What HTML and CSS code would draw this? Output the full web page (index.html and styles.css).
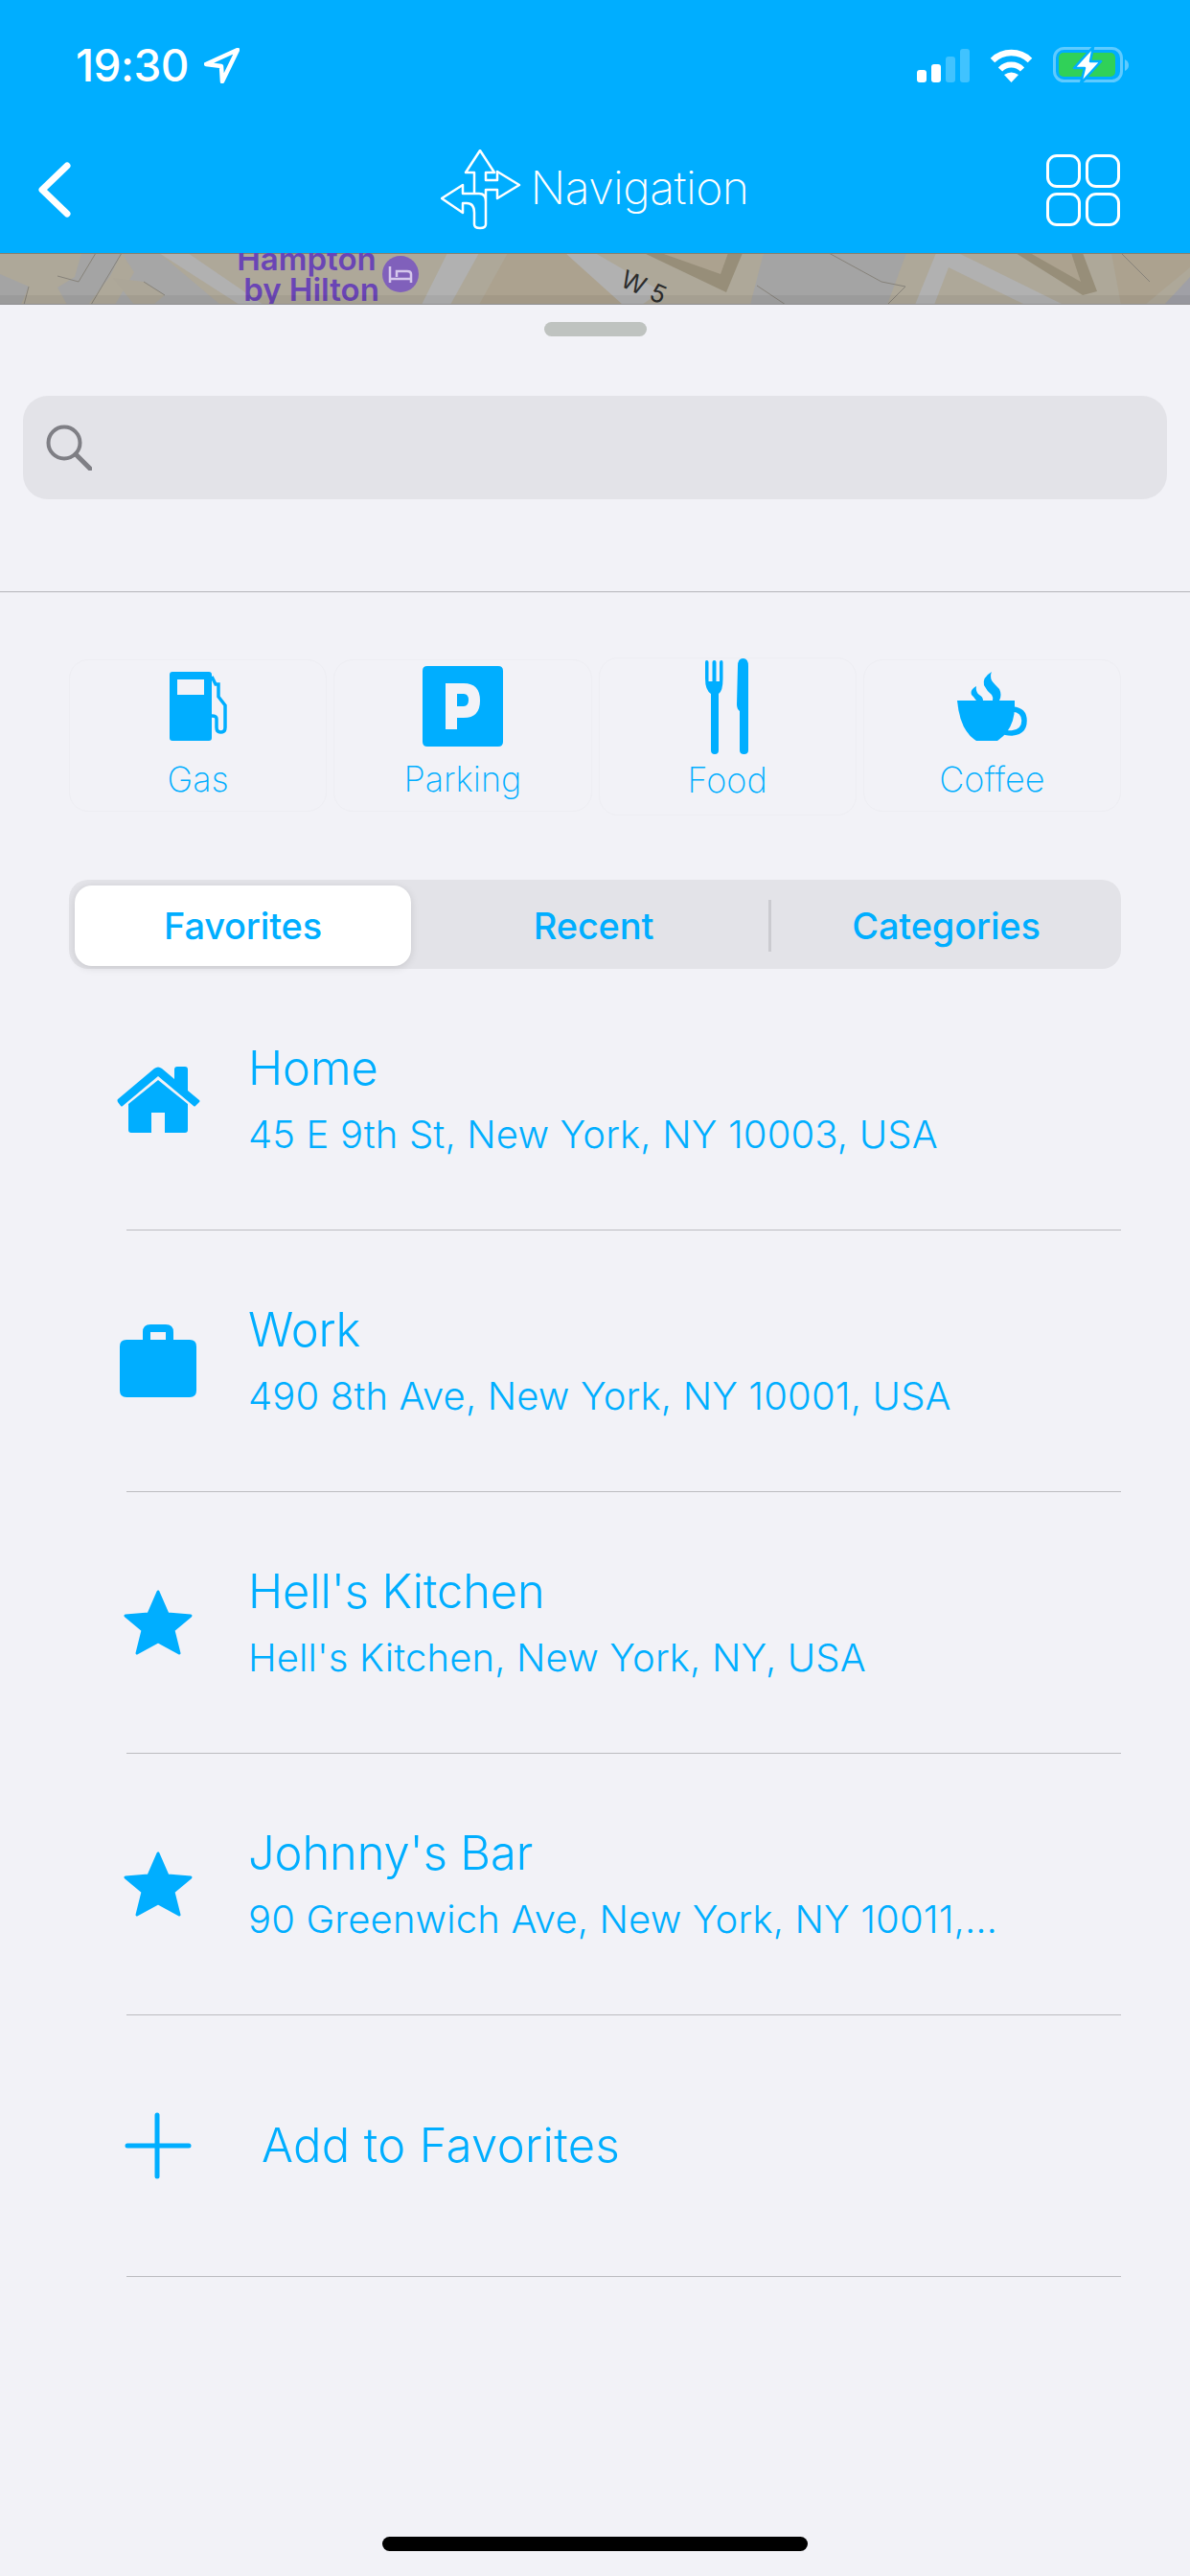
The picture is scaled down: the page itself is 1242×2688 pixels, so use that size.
FILE: index.html
```html
<!DOCTYPE html>
<html lang="en">
<head>
    <meta charset="UTF-8">
    <meta name="viewport" content="width=device-width, initial-scale=1.0">
    <title>Navigation</title>
    <link rel="stylesheet" href="styles.css">
</head>
<body>
    <header class="app-header">
        <div class="status-bar">
            <div class="status-left">
                <span class="status-time">19:30</span>
                <svg class="icon-location" viewBox="0 0 37 37"><path d="M35 2 L2 17 L18 19 L19 35 Z" fill="none" stroke="#fff" stroke-width="4.5" stroke-linejoin="round"/></svg>
            </div>
            <div class="status-right">
                <div class="signal">
                    <span class="bar bar-1"></span>
                    <span class="bar bar-2"></span>
                    <span class="bar bar-3 bar-off"></span>
                    <span class="bar bar-4 bar-off"></span>
                </div>
                <svg class="icon-wifi" viewBox="0 0 47 36">
                    <path d="M4 13 A28 28 0 0 1 43 13" fill="none" stroke="#fff" stroke-width="6.5"/>
                    <path d="M12 22.5 A16 16 0 0 1 35 22.5" fill="none" stroke="#fff" stroke-width="6"/>
                    <path d="M23.5 36 L16 28 Q23.5 23 31 28 Z" fill="#fff"/>
                </svg>
                <svg class="icon-battery" viewBox="0 0 79 38">
                    <rect x="1.5" y="1.5" width="70" height="34" rx="10" fill="none" stroke="#5fcbff" stroke-width="3"/>
                    <rect x="6" y="6" width="59" height="25" rx="5" fill="#30d158"/>
                    <path d="M75 13 Q79 15 79 19 Q79 23 75 25 Z" fill="#5fcbff"/>
                    <path d="M42 0 L22 22 H33 L29 38 L50 15 H39 Z" fill="#fff" stroke="#00aeff" stroke-width="2.5" stroke-linejoin="round"/>
                </svg>
            </div>
        </div>
        <nav class="nav-bar">
            <svg class="icon-back" viewBox="0 0 34 58"><path d="M30 4 L4 29 L30 54" fill="none" stroke="#fff" stroke-width="7" stroke-linecap="round" stroke-linejoin="round"/></svg>
            <div class="nav-title">
                <svg class="icon-turns" viewBox="0 0 84 84">
                    <path d="M41 1 L56 24 H47 V32 H59 V23 L82 37 L59 51 V42 H47 V78 Q47 82 41 82 Q35 82 35 78 V66 Q35 56 27 56 H23 V66 L1 51 L23 37 V46 H35 V24 H26 Z M35 46 H40 Q47 46 47 54" fill="none" stroke="#fff" stroke-width="2.5" stroke-linejoin="round"/>
                </svg>
                <h1>Navigation</h1>
            </div>
            <div class="icon-grid">
                <span></span><span></span><span></span><span></span>
            </div>
        </nav>
    </header>

    <svg class="map-strip" viewBox="0 0 1242 54" preserveAspectRatio="none">
        <rect width="1242" height="54" fill="#aea899"/>
        <!-- left buildings -->
        <polygon points="85,0 127,0 115,24 92,54 70,54 60,36 78,25" fill="#a4a4a4"/>
        <polygon points="0,22 30,35 22,54 0,54" fill="#a4a4a4"/>
        <polygon points="127,0 166,0 230,54 120,54 140,20" fill="#a6a6a6"/>
        <polygon points="118,26 150,30 172,44 160,54 140,54" fill="#aca698"/>
        <!-- roads -->
        <polygon points="166,0 196,0 275,54 250,54" fill="#b1b1b1"/>
        <polygon points="440,54 467,0 500,0 470,54" fill="#b1b1b1"/>
        <polygon points="590,0 621,0 690,40 670,54 640,54" fill="#b1b1b1"/>
        <polygon points="977,0 1000,0 1110,54 1070,54 990,15 975,54 955,54" fill="#b1b1b1"/>
        <!-- right buildings -->
        <polygon points="500,54 530,0 590,0 650,54" fill="#aca28f"/>
        <polygon points="672,0 775,0 758,41" fill="#978e79"/>
        <polygon points="690,0 760,0 752,22" fill="#aca28f"/>
        <polygon points="797,0 946,0 926,54 783,54" fill="#a4a4a4"/>
        <polygon points="1060,0 1130,0 1145,40 1130,44" fill="#978e79"/>
        <polygon points="1075,0 1118,0 1128,30" fill="#aca28f"/>
        <polygon points="1160,0 1242,0 1242,15 1195,54 1170,54" fill="#aca28f"/>
        <polygon points="1215,54 1242,25 1242,54" fill="#a0a0a6"/>
        <!-- thin building outlines -->
        <path d="M100 0 L82 30 L60 24 M127 0 L95 54 M30 35 L25 54 M150 30 L172 44 M865 0 L920 30 L945 35 L926 54 M790 34 L820 54 M1170 0 L1200 30" fill="none" stroke="#86827a" stroke-width="1"/>
        <line x1="0" y1="0" x2="1242" y2="0" stroke="#85806f" stroke-width="2"/>
        <text class="map-poi" x="320" y="18" text-anchor="middle">Hampton</text>
        <text class="map-poi" x="325" y="50" text-anchor="middle">by Hilton</text>
        <circle cx="418" cy="22" r="19" fill="#8060bb"/>
        <path d="M407 14 V31 M407 27 H429 V31 M429 27 V22 Q429 19 425 19 H414 V25" fill="none" stroke="#d5c8ec" stroke-width="2.5"/>
        <text class="map-street" x="646" y="34" transform="rotate(24 646 34)">W 5</text>
        <rect y="44" width="1242" height="10" fill="#000" opacity="0.05"/>
        <line x1="0" y1="53.5" x2="1242" y2="53.5" stroke="#8e8e90" stroke-width="1"/>
    </svg>

    <main class="sheet">
        <div class="handle"></div>

        <div class="search-field">
            <svg class="icon-search" viewBox="0 0 48 48">
                <circle cx="19" cy="19" r="16.5" fill="none" stroke="#7f7f85" stroke-width="4"/>
                <line x1="31" y1="31" x2="46" y2="46" stroke="#7f7f85" stroke-width="5" stroke-linecap="round"/>
            </svg>
        </div>

        <hr class="section-line">

        <div class="tiles">
            <div class="tile">
                <div class="tile-icon">
                    <svg class="icon-gas" viewBox="0 0 60 72">
                        <path d="M3 0 H41 Q44 0 44 3 V69 Q44 72 41 72 H3 Q0 72 0 69 V3 Q0 0 3 0 Z M8 8 V24 H36 V8 Z" fill="#00aeff" fill-rule="evenodd"/>
                        <path d="M44 5 L48 13 H51 V26 L58 35 V58 Q58 63 53.5 63 Q49 63 49 58 V49 Q49 46 44 46" fill="none" stroke="#00aeff" stroke-width="3.5"/>
                    </svg>
                </div>
                <span class="tile-label">Gas</span>
            </div>
            <div class="tile">
                <div class="tile-icon">
                    <svg class="icon-parking" viewBox="0 0 84 84">
                        <path d="M5 0 H79 Q84 0 84 5 V79 Q84 84 79 84 H5 Q0 84 0 79 V5 Q0 0 5 0 Z M24 18 V66 H36 V54 H43 Q60 54 60 36 Q60 18 43 18 Z M36 29 H43 Q48 29 48 35.5 Q48 42 43 42 H36 Z" fill="#00aeff" fill-rule="evenodd"/>
                    </svg>
                </div>
                <span class="tile-label">Parking</span>
            </div>
            <div class="tile tile-food">
                <div class="tile-icon">
                    <svg class="icon-food" viewBox="0 0 46 100">
                        <path d="M0 4 Q0 2 1.5 2 Q3.5 2 3.5 4 V24 H7.5 V4 Q7.5 2 9.5 2 Q11.5 2 11.5 4 V24 H15 V4 Q15 2 17 2 Q18.5 2 18.5 4 V21 Q18.5 34 14 37 V96 Q14 100 10 100 Q6 100 6 96 V37 Q0 33 0 21 Z" fill="#00aeff"/>
                        <path d="M34 8 Q34 0 39.5 0 Q45 0 45 8 V96 Q45 100 40.5 100 Q36 100 36 96 V55 Q33 53 33 48 Z" fill="#00aeff"/>
                    </svg>
                </div>
                <span class="tile-label">Food</span>
            </div>
            <div class="tile">
                <div class="tile-icon">
                    <svg class="icon-coffee" viewBox="0 0 73 72">
                        <path d="M0 30 H60 V36 Q60 60 42 72 H20 Q3 62 0 30 Z" fill="#00aeff"/>
                        <path d="M58 39 Q70 40 70 51 Q70 63 57 64 Q50 64 47 62" fill="none" stroke="#00aeff" stroke-width="5.5"/>
                        <path d="M36 0 Q26 6 28 14 Q31 20 36 24 Q38 27 37 30 H44 Q47 24 44 18 Q38 12 36 9 Q34 4 36 0 Z" fill="#00aeff"/>
                        <path d="M20 15 Q13 19 15 24 Q18 27 20 30 H27 Q27 26 23 24 Q19 21 20 15 Z" fill="#00aeff"/>
                    </svg>
                </div>
                <span class="tile-label">Coffee</span>
            </div>
        </div>

        <div class="segmented">
            <div class="segment segment-active">Favorites</div>
            <div class="segment segment-recent">Recent</div>
            <div class="segment-sep"></div>
            <div class="segment">Categories</div>
        </div>

        <ul class="places">
            <li class="place">
                <div class="place-icon">
                    <svg class="icon-home" viewBox="0 0 87 69">
                        <path d="M12 39 L43 14 L74 39 V66 Q74 69 71 69 H50 V48 H36 V69 H15 Q12 69 12 66 Z" fill="#00aeff"/>
                        <path d="M1 34 L39 2 Q43 -1 47 2 L60 13 V3 Q60 0 63 0 H71 Q74 0 74 3 V25 L86 35 Q87 36 86 37 L82 41 Q81 42 80 41 L43 10 L6 41 Q5 42 4 41 L1 37 Q0 35 1 34 Z" fill="#00aeff"/>
                    </svg>
                </div>
                <div class="place-text">
                    <div class="place-name">Home</div>
                    <div class="place-address">45 E 9th St, New York, NY 10003, USA</div>
                </div>
            </li>
            <li class="place">
                <div class="place-icon">
                    <svg class="icon-work" viewBox="0 0 80 76">
                        <path d="M7 16 H24 V8 Q24 0 32 0 H48 Q56 0 56 8 V16 H73 Q80 16 80 23 V69 Q80 76 73 76 H7 Q0 76 0 69 V23 Q0 16 7 16 Z M32 8 V16 H48 V8 Z" fill="#00aeff" fill-rule="evenodd"/>
                    </svg>
                </div>
                <div class="place-text">
                    <div class="place-name">Work</div>
                    <div class="place-address">490 8th Ave, New York, NY 10001, USA</div>
                </div>
            </li>
            <li class="place">
                <div class="place-icon">
                    <svg class="icon-star" viewBox="0 0 72 68"><path d="M36 2 L46 25 L70 27 L52 42 L58 66 L36 54 L14 66 L20 42 L2 27 L26 25 Z" fill="#00aeff" stroke="#00aeff" stroke-width="3" stroke-linejoin="round"/></svg>
                </div>
                <div class="place-text">
                    <div class="place-name">Hell's Kitchen</div>
                    <div class="place-address">Hell's Kitchen, New York, NY, USA</div>
                </div>
            </li>
            <li class="place">
                <div class="place-icon">
                    <svg class="icon-star" viewBox="0 0 72 68"><path d="M36 2 L46 25 L70 27 L52 42 L58 66 L36 54 L14 66 L20 42 L2 27 L26 25 Z" fill="#00aeff" stroke="#00aeff" stroke-width="3" stroke-linejoin="round"/></svg>
                </div>
                <div class="place-text">
                    <div class="place-name">Johnny's Bar</div>
                    <div class="place-address">90 Greenwich Ave, New York, NY 10011,…</div>
                </div>
            </li>
            <li class="place place-add">
                <div class="place-icon">
                    <svg class="icon-plus" viewBox="0 0 70 70">
                        <line x1="3" y1="35" x2="67" y2="35" stroke="#00aeff" stroke-width="5" stroke-linecap="round"/>
                        <line x1="34" y1="3" x2="34" y2="67" stroke="#00aeff" stroke-width="5" stroke-linecap="round"/>
                    </svg>
                </div>
                <div class="place-name place-add-label">Add to Favorites</div>
            </li>
        </ul>

        <div class="home-indicator"></div>
    </main>
</body>
</html>
```

FILE: styles.css
```css
html, body {
    margin: 0;
    padding: 0;
}
body {
    width: 1242px;
    height: 2688px;
    overflow: hidden;
    display: flex;
    flex-direction: column;
    font-family: 'Inter', 'Liberation Sans', sans-serif;
    font-weight: 300;
    color: #00aeff;
    background-color: #f2f2f7;
}
svg {
    display: block;
    flex-shrink: 0;
}

/* header */
.app-header {
    background-color: #00aeff;
    color: white;
    height: 264px;
    flex-shrink: 0;
}
.status-bar {
    height: 136px;
    display: flex;
    align-items: center;
    justify-content: space-between;
    padding: 0 64px 0 79px;
}
.status-left {
    display: flex;
    align-items: center;
    gap: 16px;
}
.status-time {
    font-size: 46px;
    font-weight: 500;
    letter-spacing: -0.5px;
}
.icon-location {
    width: 37px;
    height: 37px;
}
.status-right {
    display: flex;
    align-items: center;
    gap: 20px;
}
.signal {
    display: flex;
    align-items: flex-end;
    gap: 5px;
    height: 35px;
}
.bar {
    width: 10px;
    background-color: white;
    border-radius: 3px;
}
.bar-1 { height: 13px; }
.bar-2 { height: 19px; }
.bar-3 { height: 27px; }
.bar-4 { height: 35px; }
.bar-off {
    background-color: #40c3ff;
}
.icon-wifi {
    width: 47px;
    height: 36px;
}
.icon-battery {
    width: 79px;
    height: 38px;
}
.nav-bar {
    height: 124px;
    padding: 0 40px 4px;
    display: grid;
    grid-template-columns: 1fr auto 1fr;
    align-items: center;
}
.icon-back {
    width: 34px;
    height: 58px;
}
.nav-title {
    display: flex;
    align-items: center;
    gap: 9px;
}
.nav-title h1 {
    margin: 0 0 6px;
    font-size: 48px;
    font-weight: 200;
    letter-spacing: -0.5px;
}
.icon-turns {
    width: 84px;
    height: 84px;
}
.icon-grid {
    justify-self: end;
    margin-right: 33px;
    display: grid;
    grid-template-columns: 36px 36px;
    grid-template-rows: 35px 35px;
    gap: 5px;
}
.icon-grid span {
    border: 3px solid white;
    border-radius: 11px;
}

/* map behind the sheet */
.map-strip {
    width: 1242px;
    height: 54px;
}
.map-poi {
    font-family: 'Inter', sans-serif;
    font-size: 33px;
    font-weight: 600;
    fill: #6a45b5;
}
.map-street {
    font-family: 'Inter', sans-serif;
    font-size: 26px;
    font-weight: 400;
    fill: #2c2c2c;
}

/* sheet */
.sheet {
    flex: 1;
    display: flex;
    flex-direction: column;
    background-color: #f2f2f7;
}
.handle {
    width: 107px;
    height: 15px;
    margin: 18px auto 0;
    border-radius: 8px;
    background-color: #bfc3c0;
}
.search-field {
    height: 108px;
    margin: 62px 24px 0;
    padding-left: 24px;
    display: flex;
    align-items: center;
    border-radius: 26px;
    background-color: #e3e3e8;
}
.icon-search {
    width: 48px;
    height: 48px;
}
.section-line {
    width: 100%;
    height: 1px;
    margin: 96px 0 0;
    border: none;
    background-color: #b5b5ba;
}

/* category tiles */
.tiles {
    display: flex;
    gap: 7px;
    margin: 70px 72px 0;
}
.tile {
    flex: 1;
    height: 159px;
    box-sizing: border-box;
    display: flex;
    flex-direction: column;
    align-items: center;
    border: 1px solid #eeeef3;
    border-radius: 20px;
}
.tile-food {
    height: 165px;
    margin: -2px 0 -4px;
    padding-top: 2px;
}
.tile-icon {
    height: 96px;
    flex-shrink: 0;
    display: flex;
    align-items: center;
    justify-content: center;
}
.tile-label {
    margin-top: 4px;
    font-size: 36px;
    line-height: 48px;
    font-weight: 250;
}
.tile-food .tile-label {
    margin-top: 5px;
}
.icon-gas {
    width: 60px;
    height: 72px;
}
.icon-parking {
    width: 84px;
    height: 84px;
}
.icon-food {
    width: 46px;
    height: 100px;
}
.icon-coffee {
    width: 73px;
    height: 72px;
}

/* segmented control */
.segmented {
    height: 93px;
    box-sizing: border-box;
    margin: 71px 72px 0;
    padding: 6px 0 3px 6px;
    display: flex;
    align-items: stretch;
    border-radius: 20px;
    background-color: #e3e3e8;
}
.segment {
    flex: 1;
    display: flex;
    align-items: center;
    justify-content: center;
    font-size: 38px;
    font-weight: 500;
    letter-spacing: -0.2px;
}
.segment-active {
    flex: none;
    width: 351px;
    border-radius: 18px;
    background-color: white;
    box-shadow: 0 2px 8px rgba(0, 0, 0, 0.12);
}
.segment-recent {
    flex: none;
    width: 373px;
    box-sizing: border-box;
    padding-left: 8px;
}
.segment-sep {
    width: 3px;
    height: 54px;
    align-self: center;
    background-color: #cbcbd0;
}

/* favorites list */
.places {
    list-style: none;
    margin: 0;
    padding: 0;
}
.place {
    height: 273px;
    box-sizing: border-box;
    margin: 0 72px 0 132px;
    display: flex;
    align-items: center;
    border-bottom: 1px solid #bcbcc0;
}
.place-icon {
    width: 130px;
    margin-left: -32px;
    flex-shrink: 0;
    display: flex;
    justify-content: center;
}
.place-text {
    margin-left: 29px;
    display: flex;
    flex-direction: column;
    gap: 14px;
}
.place-name {
    font-size: 49px;
    line-height: 60px;
    letter-spacing: -0.2px;
}
.place-address {
    font-size: 40px;
    line-height: 50px;
    letter-spacing: 0.15px;
    white-space: nowrap;
}
.place-add-label {
    margin-left: 43px;
    letter-spacing: 0.3px;
}
.icon-home {
    width: 87px;
    height: 69px;
}
.icon-work {
    width: 80px;
    height: 76px;
}
.icon-star {
    width: 72px;
    height: 68px;
}
.icon-plus {
    width: 70px;
    height: 70px;
}
.home-indicator {
    width: 444px;
    height: 15px;
    margin: auto auto 26px;
    border-radius: 8px;
    background-color: black;
}
```
